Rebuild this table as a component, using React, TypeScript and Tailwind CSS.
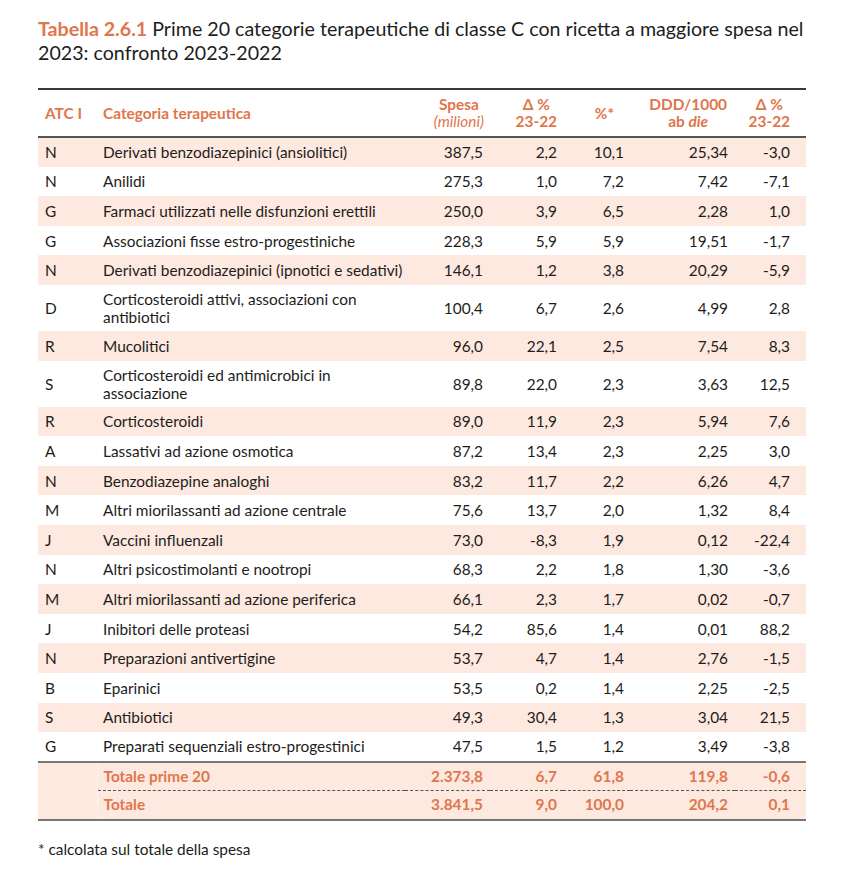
import React from "react";

type Row = { atc: string; cat: React.ReactNode; two?: boolean; v: string[] };

const rows: Row[] = [
  { atc: "N", cat: "Derivati benzodiazepinici (ansiolitici)", v: ["387,5", "2,2", "10,1", "25,34", "-3,0"] },
  { atc: "N", cat: "Anilidi", v: ["275,3", "1,0", "7,2", "7,42", "-7,1"] },
  { atc: "G", cat: "Farmaci utilizzati nelle disfunzioni erettili", v: ["250,0", "3,9", "6,5", "2,28", "1,0"] },
  { atc: "G", cat: "Associazioni fisse estro-progestiniche", v: ["228,3", "5,9", "5,9", "19,51", "-1,7"] },
  { atc: "N", cat: "Derivati benzodiazepinici (ipnotici e sedativi)", v: ["146,1", "1,2", "3,8", "20,29", "-5,9"] },
  { atc: "D", cat: <>Corticosteroidi attivi, associazioni con<br />antibiotici</>, two: true, v: ["100,4", "6,7", "2,6", "4,99", "2,8"] },
  { atc: "R", cat: "Mucolitici", v: ["96,0", "22,1", "2,5", "7,54", "8,3"] },
  { atc: "S", cat: <>Corticosteroidi ed antimicrobici in<br />associazione</>, two: true, v: ["89,8", "22,0", "2,3", "3,63", "12,5"] },
  { atc: "R", cat: "Corticosteroidi", v: ["89,0", "11,9", "2,3", "5,94", "7,6"] },
  { atc: "A", cat: "Lassativi ad azione osmotica", v: ["87,2", "13,4", "2,3", "2,25", "3,0"] },
  { atc: "N", cat: "Benzodiazepine analoghi", v: ["83,2", "11,7", "2,2", "6,26", "4,7"] },
  { atc: "M", cat: "Altri miorilassanti ad azione centrale", v: ["75,6", "13,7", "2,0", "1,32", "8,4"] },
  { atc: "J", cat: "Vaccini influenzali", v: ["73,0", "-8,3", "1,9", "0,12", "-22,4"] },
  { atc: "N", cat: "Altri psicostimolanti e nootropi", v: ["68,3", "2,2", "1,8", "1,30", "-3,6"] },
  { atc: "M", cat: "Altri miorilassanti ad azione periferica", v: ["66,1", "2,3", "1,7", "0,02", "-0,7"] },
  { atc: "J", cat: "Inibitori delle proteasi", v: ["54,2", "85,6", "1,4", "0,01", "88,2"] },
  { atc: "N", cat: "Preparazioni antivertigine", v: ["53,7", "4,7", "1,4", "2,76", "-1,5"] },
  { atc: "B", cat: "Eparinici", v: ["53,5", "0,2", "1,4", "2,25", "-2,5"] },
  { atc: "S", cat: "Antibiotici", v: ["49,3", "30,4", "1,3", "3,04", "21,5"] },
  { atc: "G", cat: "Preparati sequenziali estro-progestinici", v: ["47,5", "1,5", "1,2", "3,49", "-3,8"] },
];

const numPad = ["pr-[7px]", "pr-[6px]", "pr-[6px]", "pr-[7px]", "pr-[16px]"];

export default function App() {
  return (
    <div className="w-[853px] h-[878px] bg-white text-[#1d1d1b]" style={{ fontFamily: "Lato, 'Open Sans', sans-serif" }}>
      <div className="pl-[38px] pr-[47px] pt-[17px]">
        <p className="text-[19.65px] leading-[24px] whitespace-nowrap">
          <span className="font-bold text-[#e0764c]">Tabella 2.6.1</span> Prime 20 categorie terapeutiche di classe C con ricetta a maggiore spesa nel
          <br />
          2023: confronto 2023-2022
        </p>
        <table className="mt-[23px] w-[768px] border-collapse table-fixed text-[15.4px]">
          <colgroup>
            <col className="w-[59px]" />
            <col className="w-[308px]" />
            <col className="w-[85px]" />
            <col className="w-[73px]" />
            <col className="w-[67px]" />
            <col className="w-[105px]" />
            <col className="w-[71px]" />
          </colgroup>
          <thead>
            <tr className="border-t-2 border-b-2 border-t-[#3a3a3a] border-b-[#555] h-[48px] text-[#e0764c] font-bold leading-[17px]">
              <th className="text-left pl-[7px] font-bold">ATC I</th>
              <th className="text-left pl-[6px] font-bold">Categoria terapeutica</th>
              <th className="text-right pr-[6px]">
                <span className="inline-block text-center">Spesa<br /><span className="italic font-normal">(milioni)</span></span>
              </th>
              <th className="text-right pr-[6px]">
                <span className="inline-block text-center">Δ %<br />23-22</span>
              </th>
              <th className="text-right pr-[16px]">
                <span className="inline-block text-center">%*</span>
              </th>
              <th className="text-right pr-[8px]">
                <span className="inline-block text-center">DDD/1000<br />ab <span className="italic">die</span></span>
              </th>
              <th className="text-right pr-[16px]">
                <span className="inline-block text-center">Δ %<br />23-22</span>
              </th>
            </tr>
          </thead>
          <tbody>
            {rows.map((r, i) => (
              <tr key={i} className={`${i % 2 === 0 ? "bg-[#fde9e0]" : "bg-white"} ${r.two ? "h-[46px]" : "h-[29.6px]"} leading-[18px]`}>
                <td className="pl-[7px]">{r.atc}</td>
                <td className="pl-[6px] whitespace-nowrap">{r.cat}</td>
                {r.v.map((x, j) => (
                  <td key={j} className={`text-right ${numPad[j]}`}>{x}</td>
                ))}
              </tr>
            ))}
            <tr className="border-t-2 border-t-[#777] bg-[#fde9e0] h-[29px] text-[#e0764c] font-bold">
              <td className="border-r border-r-[#fff3ee]"></td>
              <td className="pl-[6px] border-b border-dashed border-b-[#555]">Totale prime 20</td>
              {["2.373,8", "6,7", "61,8", "119,8", "-0,6"].map((x, j) => (
                <td key={j} className={`text-right border-b border-dashed border-b-[#555] ${numPad[j]}`}>{x}</td>
              ))}
            </tr>
            <tr className="border-b-2 border-b-[#777] bg-[#fde9e0] h-[29px] text-[#e0764c] font-bold">
              <td className="border-r border-r-[#fff3ee]"></td>
              <td className="pl-[6px]">Totale</td>
              {["3.841,5", "9,0", "100,0", "204,2", "0,1"].map((x, j) => (
                <td key={j} className={`text-right ${numPad[j]}`}>{x}</td>
              ))}
            </tr>
          </tbody>
        </table>
        <p className="mt-[17px] text-[15.4px]">* calcolata sul totale della spesa</p>
      </div>
    </div>
  );
}
